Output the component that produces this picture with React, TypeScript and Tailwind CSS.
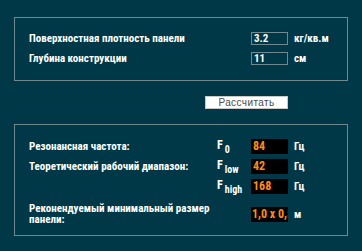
export default function App() {
  const font = { fontFamily: 'Roboto, "Liberation Sans", sans-serif', fontStretch: 'condensed' as const }
  const btnFont = { fontFamily: '"Liberation Sans", Arial, sans-serif' }
  const results = [
    { label: 'Резонансная частота:', sub: '0', value: '84', unit: 'Гц' },
    { label: 'Теоретический рабочий диапазон:', sub: 'low', value: '42', unit: 'Гц' },
    { label: '', sub: 'high', value: '168', unit: 'Гц' },
  ]

  return (
    <div className="w-[362px] h-[251px] bg-[#003847] pt-[17px] px-[14px] text-white" style={font}>
      <div className="border border-[#6f8990] h-[64px] pt-[14px] pl-[14px]">
        <div className="grid grid-cols-[222px_37px_1fr] gap-y-[7px] items-center text-[11px] leading-[13px] font-bold">
          <span>Поверхностная плотность панели</span>
          <div className="h-[13px] border border-[#6f8990] pl-[2px] leading-[11px]">3.2</div>
          <span className="pl-[6px]">кг/кв.м</span>
          <span>Глубина конструкции</span>
          <div className="h-[13px] border border-[#6f8990] pl-[2px] leading-[11px]">11</div>
          <span className="pl-[6px]">см</span>
        </div>
      </div>

      <button
        className="mt-[15px] ml-[191px] block w-[83px] h-[13px] bg-white border border-[#c8c8c8] text-[#4a4a4a] text-[10px] leading-[11px] tracking-[0.4px]"
        style={btnFont}
      >
        Рассчитать
      </button>

      <div className="mt-[15px] border border-[#6f8990] h-[112px] pt-[14px] pl-[14px]">
        <div className="grid grid-cols-[188px_34px_37px_1fr] gap-y-[5px] items-center text-[11px] leading-[13px] font-bold">
          {results.map(r => (
            <div key={r.sub} className="contents">
              <span className="whitespace-nowrap">{r.label}</span>
              <span className="h-[15px] text-[12px] leading-[12px]">
                F<span className="text-[10px] ml-[2px] relative top-[4px]">{r.sub}</span>
              </span>
              <div className="h-[15px] bg-black text-[#ff8c1a] text-[12px] pl-[2px] leading-[15px]">
                {r.value}
              </div>
              <span className="pl-[6px]">{r.unit}</span>
            </div>
          ))}
          <span className="mt-[4px] leading-[11px] whitespace-nowrap">
            Реконендуемый минимальный размер
            <br />
            панели:
          </span>
          <span />
          <div className="mt-[4px] h-[15px] bg-black text-[#ff8c1a] text-[12px] pl-[1px] leading-[15px] overflow-hidden whitespace-nowrap">
            1,0 x 0,5
          </div>
          <span className="mt-[4px] pl-[6px]">м</span>
        </div>
      </div>
    </div>
  )
}
